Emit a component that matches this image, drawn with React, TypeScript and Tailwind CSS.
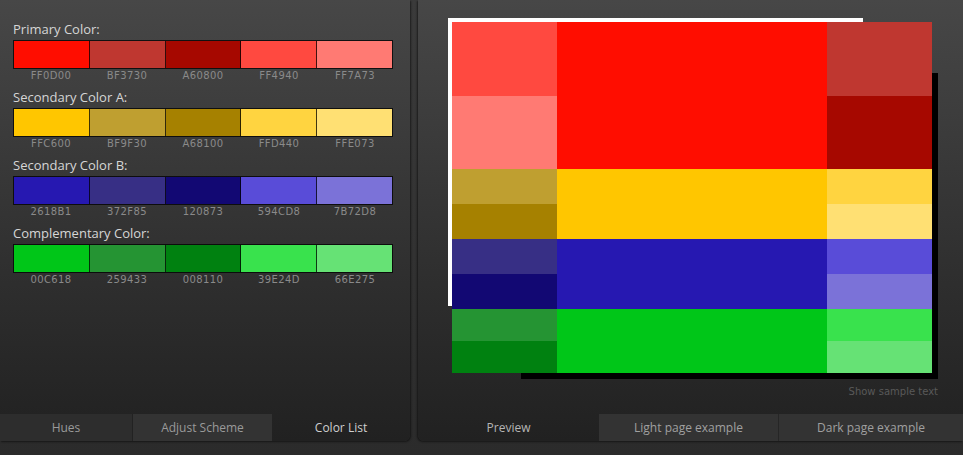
import * as React from "react"

const groups = [
  { title: "Primary Color:", colors: ["FF0D00", "BF3730", "A60800", "FF4940", "FF7A73"] },
  { title: "Secondary Color A:", colors: ["FFC600", "BF9F30", "A68100", "FFD440", "FFE073"] },
  { title: "Secondary Color B:", colors: ["2618B1", "372F85", "120873", "594CD8", "7B72D8"] },
  { title: "Complementary Color:", colors: ["00C618", "259433", "008110", "39E24D", "66E275"] },
]

// preview rows: [height, left-top, left-bottom, middle, right-top, right-bottom]
const previewRows: [number, string, string, string, string, string][] = [
  [147, "FF4940", "FF7A73", "FF0D00", "BF3730", "A60800"],
  [70, "BF9F30", "A68100", "FFC600", "FFD440", "FFE073"],
  [70, "372F85", "120873", "2618B1", "594CD8", "7B72D8"],
  [64, "259433", "008110", "00C618", "39E24D", "66E275"],
]

function ColorGroup({ title, colors }: { title: string; colors: string[] }) {
  return (
    <div className="mb-[6px]">
      <div className="h-[18px] mb-[2px] text-[13px] leading-[18px] text-[#d6d6d6]">{title}</div>
      <div className="flex h-[29px] border border-black/75">
        {colors.map((c, i) => (
          <div
            key={c}
            className={i < 4 ? "flex-1 border-r border-black/75" : "flex-1"}
            style={{ backgroundColor: "#" + c }}
          />
        ))}
      </div>
      <div className="flex h-[13px] font-['DejaVu_Sans',sans-serif] text-[10px] leading-[13px] tracking-[0.4px] text-[#8a8a8a]">
        {colors.map((c) => (
          <div key={c} className="flex-1 text-center">
            {c}
          </div>
        ))}
      </div>
    </div>
  )
}

export default function App() {
  return (
    <div className="w-[963px] h-[455px] overflow-hidden flex gap-[8px] bg-linear-to-b from-[#3b3b3b] to-[#2b2b2b] font-['Open_Sans',sans-serif]">
      {/* left panel */}
      <div className="w-[410px] h-[441px] shrink-0 flex flex-col rounded-br-[6px] overflow-hidden bg-linear-to-b from-[#474747] to-[#212121] shadow-[1px_1px_2px_rgba(0,0,0,0.5)]">
        <div className="pl-[13px] pr-[17px] pt-[20px]">
          {groups.map((g) => (
            <ColorGroup key={g.title} title={g.title} colors={g.colors} />
          ))}
        </div>
        <div className="mt-auto flex h-[27px] text-[12px] leading-[27px]">
          <div className="w-[133px] bg-[#2d2d2d] text-center text-[#9a9a9a] border-r border-[#222]">Hues</div>
          <div className="w-[139px] bg-[#333333] text-center text-[#9a9a9a]">Adjust Scheme</div>
          <div className="flex-1 text-center text-[#cfcfcf]">Color List</div>
        </div>
      </div>

      {/* right panel */}
      <div className="flex-1 h-[441px] flex flex-col rounded-bl-[6px] overflow-hidden bg-linear-to-b from-[#474747] to-[#212121] shadow-[-1px_1px_2px_rgba(0,0,0,0.5)]">
        <div className="pl-[34px] pt-[22px]">
          <div className="relative w-[480px]">
            <div className="absolute left-[-4px] top-[-4px] w-[415px] h-[288px] bg-white" />
            <div className="absolute left-[69px] top-[51px] w-[417px] h-[306px] bg-black" />
            <div className="relative flex flex-col">
              {previewRows.map(([h, l1, l2, m, r1, r2]) => (
                <div key={m} className="flex" style={{ height: h }}>
                  <div className="w-[105px] flex flex-col">
                    <div className="flex-1" style={{ backgroundColor: "#" + l1 }} />
                    <div className="flex-1" style={{ backgroundColor: "#" + l2 }} />
                  </div>
                  <div className="w-[270px]" style={{ backgroundColor: "#" + m }} />
                  <div className="w-[105px] flex flex-col">
                    <div className="flex-1" style={{ backgroundColor: "#" + r1 }} />
                    <div className="flex-1" style={{ backgroundColor: "#" + r2 }} />
                  </div>
                </div>
              ))}
            </div>
          </div>
        </div>
        <div className="mt-[13px] pr-[25px] text-right font-['DejaVu_Sans',sans-serif] text-[10px] leading-[12px] text-[#595959]">
          Show sample text
        </div>
        <div className="mt-auto flex h-[27px] text-[12px] leading-[27px]">
          <div className="w-[181px] text-center text-[#b5b5b5]">Preview</div>
          <div className="w-[180px] bg-[#333333] text-center text-[#a0a0a0] border-r border-[#262626]">Light page example</div>
          <div className="flex-1 bg-[#333333] text-center text-[#a0a0a0]">Dark page example</div>
        </div>
      </div>
    </div>
  )
}
